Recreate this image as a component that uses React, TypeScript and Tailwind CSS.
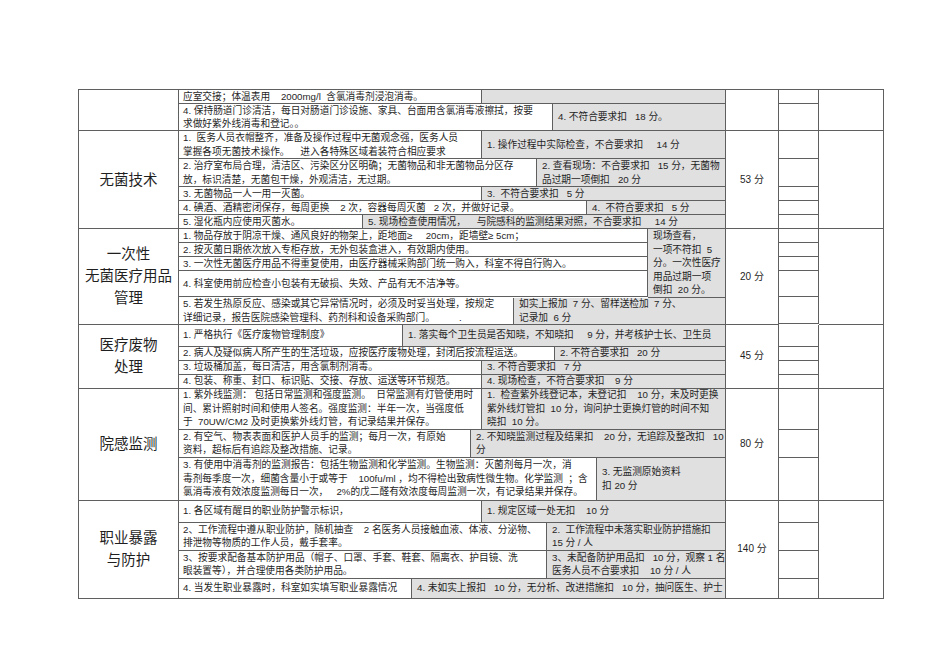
import React from 'react';

type Row = { h: string; w: string; std: string; ded: string };

type Group = {
  label: string;
  score: string;
  rows: Row[];
};

const groups: Group[] = [
  {
    label: '',
    score: '',
    rows: [
      { h: 'h-[14px]', w: 'w-[303px]', std: '应室交接；体温表用    2000mg/l  含氯消毒剂浸泡消毒。', ded: '' },
      {
        h: 'h-[27px]',
        w: 'w-[374px]',
        std: '4. 保持肠道门诊清洁，每日对肠道门诊设施、家具、台面用含氯消毒液擦拭，按要\n求做好紫外线消毒和登记。。',
        ded: '4. 不符合要求扣   18 分。',
      },
    ],
  },
  {
    label: '无菌技术',
    score: '53 分',
    rows: [
      {
        h: 'h-[28px]',
        w: 'w-[303px]',
        std: '1.  医务人员衣帽整齐，准备及操作过程中无菌观念强，医务人员\n掌握各项无菌技术操作。    进入各特殊区域着装符合相应要求',
        ded: '1. 操作过程中实际检查，不合要求扣     14 分',
      },
      {
        h: 'h-[28px]',
        w: 'w-[358px]',
        std: '2. 治疗室布局合理，清洁区、污染区分区明确；无菌物品和非无菌物品分区存\n放，标识清楚，无菌包干燥，外观清洁，无过期。',
        ded: '2. 查看现场：不合要求扣   15 分，无菌物\n品过期一项倒扣   20 分',
      },
      { h: 'h-[14px]', w: 'w-[303px]', std: '3. 无菌物品一人一用一灭菌。', ded: '3.  不符合要求扣   5 分' },
      {
        h: 'h-[14px]',
        w: 'w-[408px]',
        std: '4. 碘酒、酒精密闭保存，每周更换    2 次，容器每周灭菌   2 次，并做好记录。',
        ded: '4.  不符合要求扣   5 分',
      },
      {
        h: 'h-[14px]',
        w: 'w-[184px]',
        std: '5. 湿化瓶内应使用灭菌水。',
        ded: '5. 现场检查使用情况，    与院感科的监测结果对照，不合要求扣     14 分',
      },
    ],
  },
];

const groupsB: Group[] = [
  {
    label: '医疗废物\n处理',
    score: '45 分',
    rows: [
      {
        h: 'h-[22px]',
        w: 'w-[224px]',
        std: '1. 严格执行《医疗废物管理制度》',
        ded: '1. 落实每个卫生员是否知晓，不知晓扣     9 分，并考核护士长、卫生员',
      },
      {
        h: 'h-[14px]',
        w: 'w-[376px]',
        std: '2. 病人及疑似病人所产生的生活垃圾，应按医疗废物处理，封闭后按流程运送。',
        ded: '2. 不符合要求扣   20 分',
      },
      { h: 'h-[14px]', w: 'w-[303px]', std: '3. 垃圾桶加盖，每日清洁，用含氯制剂消毒。', ded: '3. 不符合要求扣   7 分' },
      {
        h: 'h-[14px]',
        w: 'w-[303px]',
        std: '4. 包装、称重、封口、标识贴、交接、存放、运送等环节规范。',
        ded: '4. 现场检查，不符合要求扣    9 分',
      },
    ],
  },
  {
    label: '院感监测',
    score: '80 分',
    rows: [
      {
        h: 'h-[41px]',
        w: 'w-[303px]',
        std: '1. 紫外线监测： 包括日常监测和强度监测。  日常监测有灯管使用时\n间、累计照射时间和使用人签名。强度监测：半年一次，当强度低\n于  70UW/CM2 及时更换紫外线灯管，有记录结果并保存。',
        ded: '1.  检查紫外线登记本，未登记扣    10 分，未及时更换\n紫外线灯管扣  10 分，询问护士更换灯管的时间不知\n晓扣  10 分。',
      },
      {
        h: 'h-[28px]',
        w: 'w-[292px]',
        std: '2. 有空气、物表表面和医护人员手的监测；每月一次，有原始\n资料，超标后有追踪及整改措施、记录。',
        ded: '2. 不知晓监测过程及结果扣    20 分，无追踪及整改扣   10\n分',
      },
      {
        h: 'h-[43px]',
        w: 'w-[418px]',
        std: '3. 有使用中消毒剂的监测报告：包括生物监测和化学监测。生物监测：灭菌剂每月一次，消\n毒剂每季度一次，细菌含量小于或等于    100fu/ml ，均不得检出致病性微生物。化学监测  ；含\n氯消毒液有效浓度监测每日一次，   2%的戊二醛有效浓度每周监测一次，有记录结果并保存。',
        ded: '3. 无监测原始资料\n扣 20 分',
      },
    ],
  },
  {
    label: '职业暴露\n与防护',
    score: '140 分',
    rows: [
      { h: 'h-[22px]', w: 'w-[303px]', std: '1. 各区域有醒目的职业防护警示标识，', ded: '1. 规定区域一处无扣    10 分' },
      {
        h: 'h-[28px]',
        w: 'w-[368px]',
        std: '2、工作流程中遵从职业防护，随机抽查    2 名医务人员接触血液、体液、分泌物、\n排泄物等物质的工作人员，戴手套率。',
        ded: '2.  工作流程中未落实职业防护措施扣\n15 分 / 人',
      },
      {
        h: 'h-[28px]',
        w: 'w-[368px]',
        std: '3、按要求配备基本防护用品（帽子、口罩、手套、鞋套、隔离衣、护目镜、洗\n眼装置等），并合理使用各类防护用品。',
        ded: '3、未配备防护用品扣   10 分，观察 1 名\n医务人员不合要求扣    10 分 / 人',
      },
      {
        h: 'h-[20px]',
        w: 'w-[233px]',
        std: '4. 当发生职业暴露时，科室如实填写职业暴露情况',
        ded: '4. 未如实上报扣   10 分，无分析、改进措施扣   10 分，抽问医生、护士',
      },
    ],
  },
];

const line = 'border-[#5f5f5f]';

function Label({ text }: { text: string }) {
  return (
    <div className={`w-[100px] shrink-0 border-r border-b ${line} flex items-center justify-center text-center whitespace-pre text-[14.5px] leading-[22px] text-[#1f1f1f]`}>
      {text}
    </div>
  );
}

function Score({ text }: { text: string }) {
  return (
    <div className={`w-[53px] shrink-0 border-r border-b ${line} flex items-center justify-center text-[10px] text-[#1f1f1f]`}>
      {text}
    </div>
  );
}

function Tail({ heights }: { heights: string[] }) {
  return (
    <>
      <div className="w-[40px] shrink-0 flex flex-col">
        {heights.map((h, i) => (
          <div key={i} className={`${h} border-r border-b ${line}`} />
        ))}
      </div>
      <div className={`w-[65px] shrink-0 border-r border-b ${line}`} />
    </>
  );
}

function Cells({ row }: { row: Row }) {
  return (
    <div className={`${row.h} flex`}>
      <div className={`${row.w} shrink-0 border-r border-b ${line} flex items-center px-[4px] whitespace-pre overflow-hidden`}>
        {row.std}
      </div>
      <div className={`flex-1 min-w-0 bg-[#e0e0e0] border-r border-b ${line} flex items-center px-[5px] whitespace-pre overflow-hidden`}>
        {row.ded}
      </div>
    </div>
  );
}

function GroupRow({ g }: { g: Group }) {
  return (
    <div className="flex">
      <Label text={g.label} />
      <div className="w-[547px] shrink-0 flex flex-col">
        {g.rows.map((r, i) => (
          <Cells key={i} row={r} />
        ))}
      </div>
      <Score text={g.score} />
      <Tail heights={g.rows.map((r) => r.h)} />
    </div>
  );
}

function DisposableGroup() {
  const top = [
    { h: 'h-[14px]', t: '1. 物品存放于阴凉干燥、通风良好的物架上，距地面≥     20cm，距墙壁≥ 5cm；' },
    { h: 'h-[14px]', t: '2. 按灭菌日期依次放入专柜存放，无外包装盒进入，有效期内使用。' },
    { h: 'h-[14px]', t: '3. 一次性无菌医疗用品不得重复使用，由医疗器械采购部门统一购入，科室不得自行购入。' },
    { h: 'h-[26px]', t: '4. 科室使用前应检查小包装有无破损、失效、产品有无不洁净等。' },
  ];
  return (
    <div className="flex">
      <Label text={'一次性\n无菌医疗用品\n管理'} />
      <div className="w-[547px] shrink-0 flex flex-col">
        <div className="flex">
          <div className="w-[469px] shrink-0 flex flex-col">
            {top.map((r, i) => (
              <div key={i} className={`${r.h} border-r border-b ${line} flex items-center px-[4px] whitespace-pre overflow-hidden`}>
                {r.t}
              </div>
            ))}
          </div>
          <div className={`flex-1 min-w-0 bg-[#e0e0e0] border-r border-b ${line} flex items-center px-[5px] whitespace-pre`}>
            {'现场查看，\n一项不符扣  5\n分。一次性医疗\n用品过期一项\n倒扣  20 分。'}
          </div>
        </div>
        <Cells
          row={{
            h: 'h-[27px]',
            w: 'w-[335px]',
            std: '5. 若发生热原反应、感染或其它异常情况时，必须及时妥当处理，按规定\n详细记录，报告医院感染管理科、药剂科和设备采购部门。         .',
            ded: '如实上报加  7 分、留样送检加  7 分、\n记录加  6 分',
          }}
        />
      </div>
      <Score text="20 分" />
      <Tail heights={['h-[14px]', 'h-[14px]', 'h-[14px]', 'h-[26px]', 'h-[27px]']} />
    </div>
  );
}

export default function App() {
  return (
    <div
      className="w-[950px] h-[671px] bg-white pt-[89px] pl-[78px] text-[9.7px] leading-[13.5px] text-[#1f1f1f]"
      style={{ fontFamily: '"Liberation Sans", "Noto Sans CJK SC", sans-serif' }}
    >
      <div className={`w-[806px] border-l border-t ${line} flex flex-col`}>
        {groups.map((g, i) => (
          <GroupRow key={i} g={g} />
        ))}
        <DisposableGroup />
        {groupsB.map((g, i) => (
          <GroupRow key={i} g={g} />
        ))}
      </div>
    </div>
  );
}
